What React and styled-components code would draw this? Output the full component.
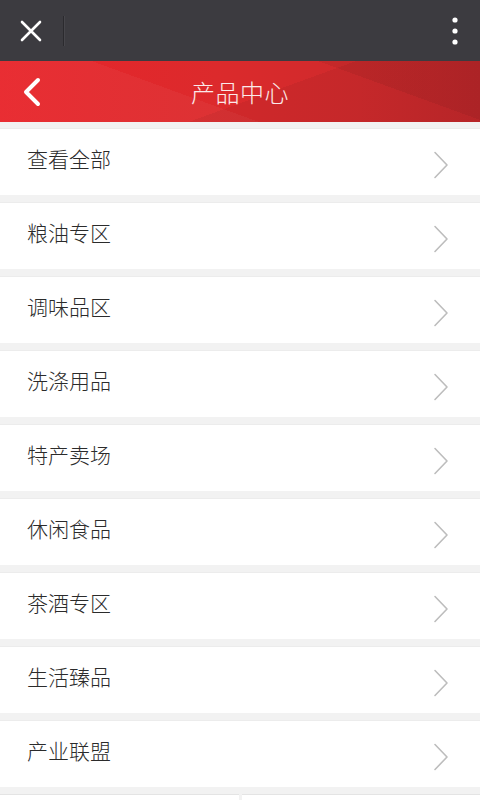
import React from "react";
import styled, { createGlobalStyle } from "styled-components";

const GlobalStyle = createGlobalStyle`
  html, body {
    margin: 0;
    padding: 0;
    background: #f2f2f2;
  }
  body {
    font-family: "Noto Sans CJK SC", "Noto Sans", "Liberation Sans", sans-serif;
  }
`;

const Page = styled.div`
  display: flex;
  flex-direction: column;
  width: 480px;
  height: 800px;
  overflow: hidden;
  background: #f2f2f2;

  & > * {
    flex-shrink: 0;
  }
`;

const TopBar = styled.div`
  display: flex;
  align-items: center;
  height: 61px;
  padding: 0 0 0 18px;
  background: #3c3b40;
`;

const IconButton = styled.div`
  display: flex;
  align-items: center;
  justify-content: center;
  width: ${(p) => p.$w || 26}px;
  height: 40px;
`;

const Divider = styled.div`
  width: 1px;
  height: 30px;
  margin-left: 19px;
  background: #2b2a2e;
  box-shadow: 1px 0 0 #47464b;
`;

const Spacer = styled.div`
  flex: 1;
`;

const Header = styled.div`
  display: flex;
  align-items: center;
  height: 61px;
  padding-left: 18px;
  background:
    linear-gradient(160deg, rgba(255, 255, 255, 0) 55%, rgba(0, 0, 0, 0.05) 55%),
    linear-gradient(20deg, rgba(255, 255, 255, 0.04) 40%, rgba(0, 0, 0, 0) 40%),
    linear-gradient(200deg, rgba(0, 0, 0, 0.06) 25%, rgba(0, 0, 0, 0) 25%),
    linear-gradient(90deg, #e8252b 0%, #dc2a2c 45%, #cf2a2c 75%, #c0272a 100%);
`;

const Title = styled.div`
  flex: 1;
  margin-right: 45px;
  text-align: center;
  color: #fbeaea;
  font-size: 24px;
  font-weight: 300;
  letter-spacing: 0.5px;
`;

const List = styled.div`
  display: flex;
  flex-direction: column;
  gap: 7px;
  padding-top: 6px;
`;

const Row = styled.div`
  display: flex;
  align-items: center;
  height: 67px;
  padding: 0 31px 0 27px;
  background: #ffffff;
  border-top: 1px solid #ececec;
  box-sizing: border-box;
`;

const Label = styled.div`
  flex: 1;
  color: #2b2b2b;
  font-size: 21px;
  font-weight: 300;
  margin-top: -8px;
`;

const Chevron = styled.svg`
  width: 16px;
  height: 28px;
  margin-top: 6px;
`;

const BottomGrid = styled.div`
  display: grid;
  grid-template-columns: 1fr 1fr;
  gap: 3px;
  margin-top: 7px;
  height: 20px;
`;

const Cell = styled.div`
  background: #ffffff;
  border-top: 1px solid #e4e4e4;
`;

const items = [
  "查看全部",
  "粮油专区",
  "调味品区",
  "洗涤用品",
  "特产卖场",
  "休闲食品",
  "茶酒专区",
  "生活臻品",
  "产业联盟",
];

export default function App() {
  return (
    <Page>
      <GlobalStyle />
      <TopBar>
        <IconButton>
          <svg width="22" height="22" viewBox="0 0 22 22">
            <path d="M2 2 L20 20 M20 2 L2 20" stroke="#ffffff" strokeWidth="2.6" strokeLinecap="round" />
          </svg>
        </IconButton>
        <Divider />
        <Spacer />
        <IconButton $w={50}>
          <svg width="6" height="30" viewBox="0 0 6 30">
            <circle cx="3" cy="4" r="2.6" fill="#ffffff" />
            <circle cx="3" cy="15" r="2.6" fill="#ffffff" />
            <circle cx="3" cy="26" r="2.6" fill="#ffffff" />
          </svg>
        </IconButton>
      </TopBar>
      <Header>
        <IconButton $w={27}>
          <svg width="20" height="30" viewBox="0 0 20 30">
            <path d="M16 3 L4 15 L16 27" fill="none" stroke="#ffffff" strokeWidth="4" strokeLinecap="round" strokeLinejoin="round" />
          </svg>
        </IconButton>
        <Title>产品中心</Title>
      </Header>
      <List>
        {items.map((name) => (
          <Row key={name}>
            <Label>{name}</Label>
            <Chevron viewBox="0 0 16 28">
              <path d="M2 1.5 L14 14 L2 26.5" fill="none" stroke="#bdbdbd" strokeWidth="1.6" strokeLinecap="round" strokeLinejoin="round" />
            </Chevron>
          </Row>
        ))}
      </List>
      <BottomGrid>
        <Cell />
        <Cell />
      </BottomGrid>
    </Page>
  );
}
